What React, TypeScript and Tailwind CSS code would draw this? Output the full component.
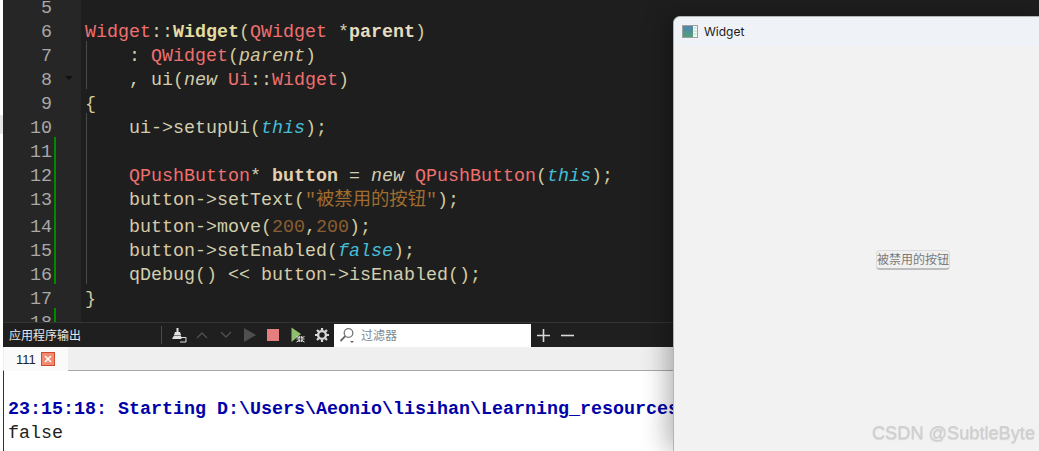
import React from "react";

const mono = "[font-family:'Liberation_Mono','Noto_Sans_CJK_SC',monospace]";

type Tok = [string, string?];
const R = "text-[#f0706f]";
const D = "text-[#d2cfae]";
const P = "text-[#d2cb9e]";
const B = "text-[#d8c8a8]";
const T = "text-[#45bdd8] italic";
const N = "text-[#d0ccb0] italic";
const S = "text-[#a06c30]";
const M = "text-[#8a5e30]";

const lines: { n: number; green?: boolean; guide?: boolean; h?: string; t: Tok[] }[] = [
  { n: 5, t: [] },
  {
    n: 6,
    t: [
      ["Widget", R],
      ["::", D],
      ["Widget", "text-[#e3dca0] font-bold"],
      ["(", P],
      ["QWidget", R],
      [" *", D],
      ["parent", "text-[#e6dcc0] font-bold"],
      [")", P],
    ],
  },
  {
    n: 7,
    guide: true,
    t: [
      ["    : ", D],
      ["QWidget", R],
      ["(", P],
      ["parent", "text-[#d8c8a0] italic"],
      [")", P],
    ],
  },
  {
    n: 8,
    guide: true,
    t: [
      ["    , ui", D],
      ["(", P],
      ["new", N],
      [" ", D],
      ["Ui", R],
      ["::", D],
      ["Widget", R],
      [")", P],
    ],
  },
  { n: 9, t: [["{", P]] },
  {
    n: 10,
    guide: true,
    t: [
      ["    ui->setupUi", D],
      ["(", P],
      ["this", T],
      [");", P],
    ],
  },
  { n: 11, guide: true, green: true, t: [] },
  {
    n: 12,
    guide: true,
    green: true,
    t: [
      ["    ", D],
      ["QPushButton", R],
      ["* ", D],
      ["button", "text-[#e3d0b0] font-bold"],
      [" = ", D],
      ["new", N],
      [" ", D],
      ["QPushButton", R],
      ["(", P],
      ["this", T],
      [");", P],
    ],
  },
  {
    n: 13,
    guide: true,
    green: true,
    h: "h-[27px]",
    t: [
      ["    ", D],
      ["button", B],
      ["->setText", D],
      ["(", P],
      ['"被禁用的按钮"', S],
      [");", P],
    ],
  },
  {
    n: 14,
    guide: true,
    green: true,
    t: [
      ["    ", D],
      ["button", B],
      ["->move", D],
      ["(", P],
      ["200", M],
      [",", D],
      ["200", M],
      [");", P],
    ],
  },
  {
    n: 15,
    guide: true,
    green: true,
    t: [
      ["    ", D],
      ["button", B],
      ["->setEnabled", D],
      ["(", P],
      ["false", T],
      [");", P],
    ],
  },
  {
    n: 16,
    guide: true,
    green: true,
    t: [
      ["    qDebug", D],
      ["() ", P],
      ["<< ", D],
      ["button", B],
      ["->isEnabled", D],
      ["();", P],
    ],
  },
  { n: 17, t: [["}", P]] },
  { n: 18, green: true, t: [] },
];

function Broom() {
  return (
    <svg width="16" height="15" viewBox="0 0 16 15" className="shrink-0">
      <path d="M5.5 0h2v4h-2z" fill="#e0e0e0" />
      <path d="M4 4h5l1 3H3z" fill="#e0e0e0" />
      <path d="M3 7.5h7l0.5 3.5H1z" fill="#e0e0e0" />
      <path d="M10 9.5h5v4.5h-6" fill="none" stroke="#e0e0e0" strokeWidth="1" />
    </svg>
  );
}

function Chevron({ up }: { up?: boolean }) {
  return (
    <svg width="12" height="8" viewBox="0 0 12 8" className="shrink-0">
      <path d={up ? "M1 7l5-5 5 5" : "M1 1l5 5 5-5"} fill="none" stroke="#505050" strokeWidth="1.4" />
    </svg>
  );
}

function DebugRun() {
  return (
    <svg width="14" height="16" viewBox="0 0 14 16" className="shrink-0">
      <path d="M0.5 0.5L10 7 0.5 15z" fill="#8fbf6c" />
      <rect x="7" y="9" width="5" height="6" rx="2" fill="#dcdcdc" />
      <path d="M5.5 9.5l2 1M13.5 9.5l-2 1M5.5 12h2M13.5 12h-2M5.5 15l2-1M13.5 15l-2-1" stroke="#dcdcdc" strokeWidth="1" />
      <path d="M9.5 9v6M7 12h5" stroke="#1f1f1f" strokeWidth="0.7" />
    </svg>
  );
}

function Gear() {
  return (
    <svg width="14" height="14" viewBox="0 0 14 14" className="shrink-0">
      <circle cx="7" cy="7" r="3.9" fill="none" stroke="#d8d8d8" strokeWidth="2.4" />
      <path
        d="M7 0v2.5M7 11.5V14M0 7h2.5M11.5 7H14M2 2l1.8 1.8M10.2 10.2L12 12M12 2l-1.8 1.8M3.8 10.2L2 12"
        stroke="#d8d8d8"
        strokeWidth="2.2"
      />
    </svg>
  );
}

function Search() {
  return (
    <svg width="16" height="16" viewBox="0 0 16 16" className="shrink-0">
      <circle cx="9.5" cy="6" r="4.3" fill="none" stroke="#777" strokeWidth="1.3" />
      <path d="M6.3 9.2L1.5 14" stroke="#666" strokeWidth="1.8" />
      <path d="M11 14h4l-2 2z" fill="#666" />
    </svg>
  );
}

function WinIcon() {
  return (
    <svg width="16" height="13" viewBox="0 0 16 13" className="shrink-0">
      <defs>
        <linearGradient id="wg" x1="0" y1="0" x2="0" y2="1">
          <stop offset="0" stopColor="#4f86b0" />
          <stop offset="1" stopColor="#4fa07a" />
        </linearGradient>
      </defs>
      <rect x="0.5" y="0.5" width="15" height="12" fill="#f4f8f4" stroke="#a0a0a0" />
      <rect x="1" y="1" width="10" height="11" fill="url(#wg)" />
      <path d="M11.5 3h3M11.5 6h3M11.5 9h3" stroke="#cfe0d0" strokeWidth="1.5" />
    </svg>
  );
}

export default function App() {
  return (
    <div className="relative flex h-[451px] w-[1039px] overflow-hidden bg-white">
      {/* left sliver of the window behind */}
      <div className="flex w-[3px] shrink-0 flex-col bg-white">
        <div className="mt-[115px] h-[19px] bg-[#e6e6e6]" />
      </div>

      <div className="flex min-w-0 flex-1 flex-col">
        {/* editor */}
        <div className={`h-[322px] shrink-0 overflow-hidden bg-[#1e1e1e] text-[18.33px] ${mono}`}>
          <div className="-mt-[7px] flex flex-col">
            {lines.map((l) => (
              <div key={l.n} className={`flex shrink-0 ${l.h ?? "h-[24px]"}`}>
                <div className="flex w-[78px] shrink-0 bg-[#262626]">
                  <span className="h-[24px] w-[49px] shrink-0 pt-[4px] text-right leading-[24px] text-[#a8a8a8]">
                    {l.n}
                  </span>
                  <span className={`ml-[2px] w-[2px] shrink-0 ${l.green ? "bg-[#008a00]" : ""}`} />
                  {l.n === 8 && (
                    <svg width="8" height="4" viewBox="0 0 8 4" className="ml-[9px] mt-[11px]">
                      <path d="M0 0h8L4 4z" fill="#101010" />
                    </svg>
                  )}
                </div>
                <div className="relative min-w-0 flex-1 whitespace-pre pl-[4px] pt-[4px] leading-[24px]">
                  {l.guide && <span className="absolute left-[5px] top-0 h-full w-px bg-[#4a4a4a]" />}
                  {l.t.map((t, i) => (
                    <span key={i} className={t[1]}>
                      {t[0]}
                    </span>
                  ))}
                </div>
              </div>
            ))}
          </div>
        </div>

        {/* output toolbar */}
        <div className="flex h-[25px] shrink-0 items-center border-t border-[#333333] bg-[#1f1f1f] font-['Noto_Sans_CJK_SC',sans-serif]">
          <span className="ml-[6px] w-[152px] shrink-0 text-[12px] leading-none text-[#e8e8e8]">应用程序输出</span>
          <span className="h-[18px] w-px shrink-0 bg-[#4a4a4a]" />
          <span className="ml-[9px]">
            <Broom />
          </span>
          <span className="ml-[9px]">
            <Chevron up />
          </span>
          <span className="ml-[12px]">
            <Chevron />
          </span>
          <svg width="12" height="14" viewBox="0 0 12 14" className="ml-[12px] shrink-0">
            <path d="M0 0l12 7-12 7z" fill="#4f4f4f" />
          </svg>
          <span className="ml-[11px] h-[12px] w-[12px] shrink-0 bg-[#e57f7f]" />
          <span className="ml-[12px]">
            <DebugRun />
          </span>
          <span className="ml-[10px]">
            <Gear />
          </span>
          <div className="ml-[5px] flex h-[23px] w-[197px] shrink-0 items-center bg-white pl-[5px]">
            <Search />
            <span className="ml-[6px] text-[12px] leading-none text-[#808890]">过滤器</span>
          </div>
          <svg width="13" height="13" viewBox="0 0 13 13" className="ml-[6px] shrink-0">
            <path d="M6.5 0v13M0 6.5h13" stroke="#d8d8d8" strokeWidth="1.6" />
          </svg>
          <svg width="13" height="13" viewBox="0 0 13 13" className="ml-[11px] shrink-0">
            <path d="M0 6.5h13" stroke="#d8d8d8" strokeWidth="1.6" />
          </svg>
        </div>

        {/* tab bar */}
        <div className="flex h-[24px] shrink-0 border-b border-[#a8a8a8] bg-[#efefef] pl-px">
          <div className="flex h-[24px] w-[64px] shrink-0 items-center bg-[#fafafa] pl-[12px] font-['Liberation_Sans',sans-serif] text-[13px] text-[#222222]">
            <span className="w-[25px] pt-px">111</span>
            <span className="flex h-[14px] w-[14px] items-center justify-center border border-[#d04a30] bg-[#f08a70]">
              <svg width="8" height="8" viewBox="0 0 8 8">
                <path d="M1 1l6 6M7 1L1 7" stroke="#fff" strokeWidth="1.6" />
              </svg>
            </span>
          </div>
        </div>

        {/* output */}
        <div className={`min-h-0 flex-1 overflow-hidden whitespace-pre border-l border-[#333333] bg-white pl-[4px] pt-[27px] text-[18.33px] leading-[24px] ${mono}`}>
          <div className="font-bold text-[#0000a8]">{"23:15:18: Starting D:\\Users\\Aeonio\\lisihan\\Learning_resources\\"}</div>
          <div className="text-[#222222]">false</div>
        </div>
      </div>

      {/* floating app window */}
      <div className="absolute left-[673px] top-[16px] flex h-[435px] w-[366px] flex-col overflow-hidden rounded-tl-[7px] border-l border-t border-[#b4b4b4] bg-[#f2f2f2] shadow-[-6px_0_26px_rgba(0,0,0,0.3)]">
        <div className="flex h-[29px] shrink-0 items-center bg-[#eff3f8] pl-[8px] font-['Inter',sans-serif] text-[12px] text-[#1a1a1a]">
          <WinIcon />
          <span className="ml-[6px]">Widget</span>
        </div>
        <div className="flex flex-1 items-center justify-center pl-[113px] pt-[22px]">
          <div className="flex h-[20px] w-[74px] items-center justify-center rounded-[4px] border border-b-2 border-[#dcdcdc] border-b-[#bcbcbc] bg-[#f0f0f0] font-['Noto_Sans_CJK_SC',sans-serif] text-[12px] leading-none text-[#7a7a7a]">
            被禁用的按钮
          </div>
        </div>
      </div>

      {/* watermark */}
      <span className="absolute bottom-[6px] right-[4px] font-['Liberation_Sans',sans-serif] text-[18.2px] leading-[24px] text-[#cfcfcf] [text-shadow:0_1px_1px_rgba(0,0,0,0.12)]">
        CSDN @SubtleByte
      </span>
    </div>
  );
}
